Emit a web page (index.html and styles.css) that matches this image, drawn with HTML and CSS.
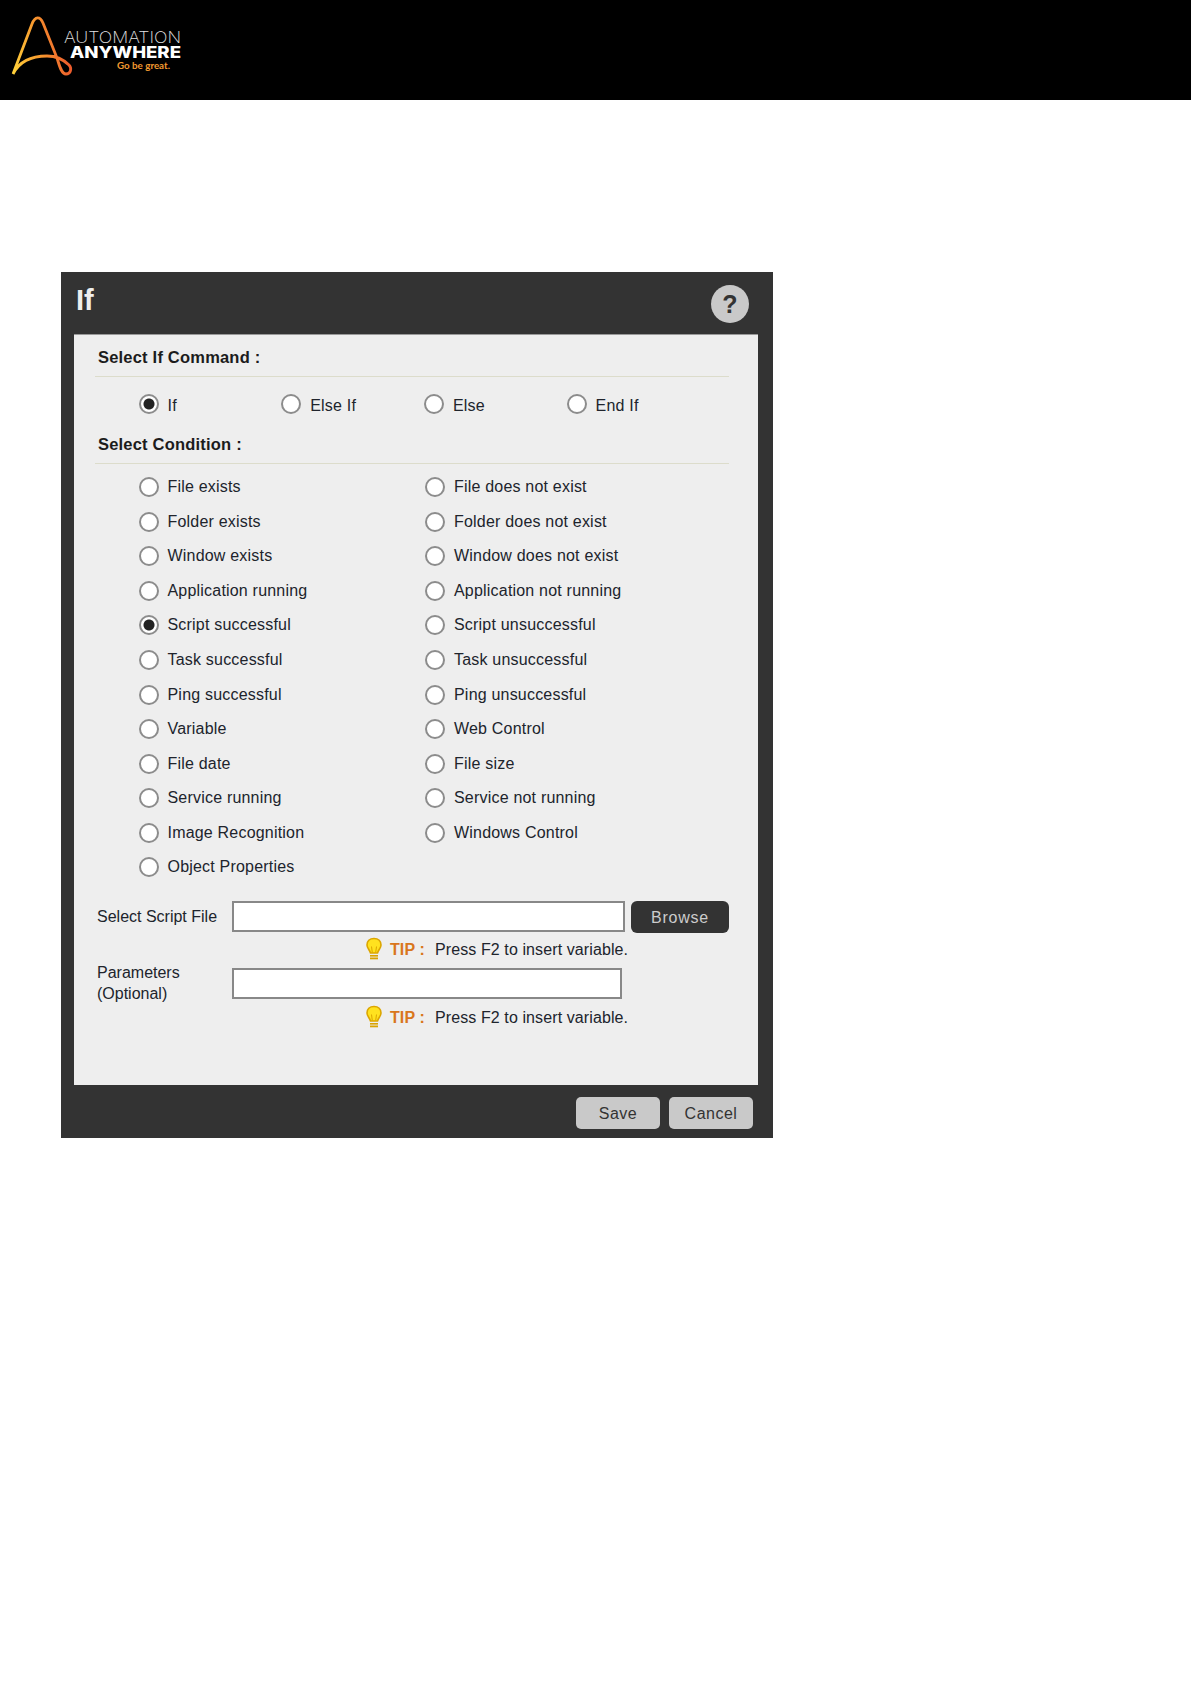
FILE: index.html
```html
<!DOCTYPE html>
<html>
<head>
	<title>If</title>
	<link rel="stylesheet" href="styles.css">
</head>
<body>
	<div class="top-bar">
		<svg class="logo" width="200" height="100" viewBox="0 0 200 100">
			<defs>
				<linearGradient id="logoGrad" gradientUnits="userSpaceOnUse" x1="13" y1="74" x2="70" y2="62">
					<stop offset="0" stop-color="#ffd23a"/>
					<stop offset="0.55" stop-color="#f7962e"/>
					<stop offset="1" stop-color="#ec5a2c"/>
				</linearGradient>
			</defs>
			<path d="M13 74 L32 24 C35 16 40 16 43 23 L57 58 C59 64 61 74 66 74 C71 74 72 68 69 65 C63 59 55 56 47 56 C32 56 20 60 13 74" fill="none" stroke="url(#logoGrad)" stroke-width="2.800" stroke-linejoin="round"/>
			<text class="logo-thin" x="64" y="43" textLength="117" lengthAdjust="spacingAndGlyphs">AUTOMATION</text>
			<text class="logo-bold" x="70" y="58" textLength="111" lengthAdjust="spacingAndGlyphs">ANYWHERE</text>
			<text class="logo-tag" x="117" y="69" textLength="53" lengthAdjust="spacingAndGlyphs">Go be great.</text>
		</svg>
	</div>

	<div class="dialog">
		<div class="dialog-title">
			<h1>If</h1>
			<span class="help">?</span>
		</div>

		<form class="panel" name="ifForm">
			<!----- If command ----->
			<h3 class="section first">Select If Command :</h3>
			<div class="commands">
				<label class="opt"><input type="radio" name="cmd" checked>If</label>
				<label class="opt"><input type="radio" name="cmd">Else If</label>
				<label class="opt"><input type="radio" name="cmd">Else</label>
				<label class="opt"><input type="radio" name="cmd">End If</label>
			</div>

			<!----- Condition ----->
			<h3 class="section">Select Condition :</h3>
			<div class="conditions">
				<label class="opt"><input type="radio" name="cond">File exists</label>
				<label class="opt"><input type="radio" name="cond">File does not exist</label>
				<label class="opt"><input type="radio" name="cond">Folder exists</label>
				<label class="opt"><input type="radio" name="cond">Folder does not exist</label>
				<label class="opt"><input type="radio" name="cond">Window exists</label>
				<label class="opt"><input type="radio" name="cond">Window does not exist</label>
				<label class="opt"><input type="radio" name="cond">Application running</label>
				<label class="opt"><input type="radio" name="cond">Application not running</label>
				<label class="opt"><input type="radio" name="cond" checked>Script successful</label>
				<label class="opt"><input type="radio" name="cond">Script unsuccessful</label>
				<label class="opt"><input type="radio" name="cond">Task successful</label>
				<label class="opt"><input type="radio" name="cond">Task unsuccessful</label>
				<label class="opt"><input type="radio" name="cond">Ping successful</label>
				<label class="opt"><input type="radio" name="cond">Ping unsuccessful</label>
				<label class="opt"><input type="radio" name="cond">Variable</label>
				<label class="opt"><input type="radio" name="cond">Web Control</label>
				<label class="opt"><input type="radio" name="cond">File date</label>
				<label class="opt"><input type="radio" name="cond">File size</label>
				<label class="opt"><input type="radio" name="cond">Service running</label>
				<label class="opt"><input type="radio" name="cond">Service not running</label>
				<label class="opt"><input type="radio" name="cond">Image Recognition</label>
				<label class="opt"><input type="radio" name="cond">Windows Control</label>
				<label class="opt"><input type="radio" name="cond">Object Properties</label>
			</div>

			<!----- Script file and parameters ----->
			<div class="field first-field">
				<label class="field-label">Select Script File</label>
				<input class="text-box wide" type="text">
				<button class="browse" type="button">Browse</button>
			</div>
			<div class="tip">
				<svg class="bulb" width="18" height="23" viewBox="0 0 18 23">
					<path d="M9 1.500 C4.500 1.500 2 4.500 2 8 C2 11 4.500 12.500 5.500 16 L12.500 16 C13.500 12.500 16 11 16 8 C16 4.500 13.500 1.500 9 1.500 Z" fill="#ffe21f" stroke="#dca600" stroke-width="1.600"/>
					<path d="M7.300 15.500 L6.500 9.500 M10.700 15.500 L11.500 9.500" stroke="#dca600" stroke-width="1"/>
					<rect x="5" y="18" width="8" height="1.600" fill="#d9a300"/>
					<rect x="5" y="20.500" width="8" height="1.800" fill="#d9a300"/>
				</svg>
				<span class="tip-word">TIP :</span>
				<span>Press F2 to insert variable.</span>
			</div>
			<div class="field second-field">
				<label class="field-label optional">Parameters<br>(Optional)</label>
				<input class="text-box narrow" type="text">
			</div>
			<div class="tip">
				<svg class="bulb" width="18" height="23" viewBox="0 0 18 23">
					<path d="M9 1.500 C4.500 1.500 2 4.500 2 8 C2 11 4.500 12.500 5.500 16 L12.500 16 C13.500 12.500 16 11 16 8 C16 4.500 13.500 1.500 9 1.500 Z" fill="#ffe21f" stroke="#dca600" stroke-width="1.600"/>
					<path d="M7.300 15.500 L6.500 9.500 M10.700 15.500 L11.500 9.500" stroke="#dca600" stroke-width="1"/>
					<rect x="5" y="18" width="8" height="1.600" fill="#d9a300"/>
					<rect x="5" y="20.500" width="8" height="1.800" fill="#d9a300"/>
				</svg>
				<span class="tip-word">TIP :</span>
				<span>Press F2 to insert variable.</span>
			</div>
		</form>

		<div class="dialog-foot">
			<button class="foot-btn" type="button">Save</button>
			<button class="foot-btn" type="button">Cancel</button>
		</div>
	</div>
</body>
</html>
```

FILE: styles.css
```css
body {
	margin: 0;
	background: #fff;
	font-family: "Liberation Sans", Arial, sans-serif;
	font-size: 16px;
	color: #20242c;
}

.top-bar {
	height: 100px;
	background: #000;
}
.logo {
	display: block;
}
.logo-thin {
	font-family: "Inter", sans-serif;
	font-weight: 200;
	font-size: 16px;
	fill: #e2e2e2;
}
.logo-bold {
	font-family: "Inter", sans-serif;
	font-weight: 800;
	font-size: 16px;
	fill: #fff;
}
.logo-tag {
	font-family: "Lato", sans-serif;
	font-weight: 700;
	font-size: 8.500px;
	fill: #f39a30;
}

.dialog {
	width: 712px;
	height: 866px;
	margin: 172px 0 0 61px;
	background: #333;
	display: flex;
	flex-direction: column;
}
.dialog-title {
	height: 62px;
	display: flex;
	justify-content: space-between;
	align-items: flex-start;
	padding: 0 24px 0 15px;
}
.dialog-title h1 {
	margin: 10px 0 0;
	font-size: 29px;
	line-height: 36px;
	color: #eee;
}
.help {
	width: 38px;
	height: 38px;
	margin-top: 13px;
	border-radius: 50%;
	background: #c9c9c9;
	color: #333;
	font-size: 25px;
	font-weight: bold;
	line-height: 38px;
	text-align: center;
}

.panel {
	height: 751px;
	box-sizing: border-box;
	margin: 0 15px 0 13px;
	padding: 0 29px 0 21px;
	background: #eee;
	border-top: 1px solid #999;
}

.section {
	margin: 0;
	height: 38px;
	box-sizing: border-box;
	padding: 8px 0 0 3px;
	font-size: 16.500px;
	line-height: 20px;
	letter-spacing: 0.200px;
	color: #1c1c1c;
	border-bottom: 1px solid #dcdccb;
}
.section.first {
	height: 42px;
	padding-top: 12px;
}

.commands {
	height: 49px;
	padding: 19px 0 0 43.500px;
	box-sizing: border-box;
	display: grid;
	grid-template-columns: repeat(4, 142.700px);
	align-items: start;
}
.commands .opt input {
	margin-bottom: 4px;
}
.conditions {
	margin-top: 6px;
	padding-left: 43.500px;
	display: grid;
	grid-template-columns: 286.500px 286px;
	grid-auto-rows: 34.550px;
}

.opt {
	display: flex;
	align-items: center;
	gap: 9px;
	height: 20px;
	font-size: 16px;
	letter-spacing: 0.200px;
	white-space: nowrap;
}
.conditions .opt {
	height: 34.550px;
}
.opt input {
	appearance: none;
	width: 20px;
	height: 20px;
	margin: 0;
	flex: none;
	border: 2px solid #8c8c8c;
	border-radius: 50%;
	background: #fff;
}
.opt input:checked {
	background: radial-gradient(circle, #222 0 5px, #fff 6px);
}

.field {
	display: flex;
	align-items: flex-start;
	height: 32px;
}
.first-field {
	margin-top: 16px;
}
.second-field {
	height: 33px;
}
.field-label {
	width: 137px;
	flex: none;
	padding-left: 2px;
	box-sizing: border-box;
	line-height: 21px;
}
.first-field .field-label {
	padding-top: 5px;
}
.field-label.optional {
	margin-top: -6px;
}
.text-box {
	height: 31px;
	box-sizing: border-box;
	border: 2px solid #888;
	background: #fff;
	margin: 0;
}
.wide {
	width: 393px;
}
.narrow {
	width: 390px;
}
.browse {
	width: 98px;
	height: 32px;
	margin-left: 6px;
	padding: 2px 0 0;
	border: 0;
	border-radius: 6px;
	background: #333;
	color: #ccc;
	font-family: inherit;
	font-size: 16px;
	letter-spacing: 0.800px;
}

.tip {
	height: 35px;
	padding-left: 270px;
	display: flex;
	align-items: center;
	line-height: 20px;
	letter-spacing: 0.100px;
}
.bulb {
	flex: none;
	margin: 0 7px 3px 0;
}
.tip-word {
	width: 45px;
	color: #d9761c;
	font-weight: bold;
	flex: none;
}

.dialog-foot {
	flex: 1;
	display: flex;
	justify-content: flex-end;
	gap: 9px;
	padding: 12px 20px 0 0;
}
.foot-btn {
	width: 84px;
	height: 32px;
	padding: 2px 0 0;
	border: 0;
	border-radius: 5px;
	background: #c9c9c9;
	color: #333;
	font-family: inherit;
	font-size: 16px;
	letter-spacing: 0.500px;
}
```
